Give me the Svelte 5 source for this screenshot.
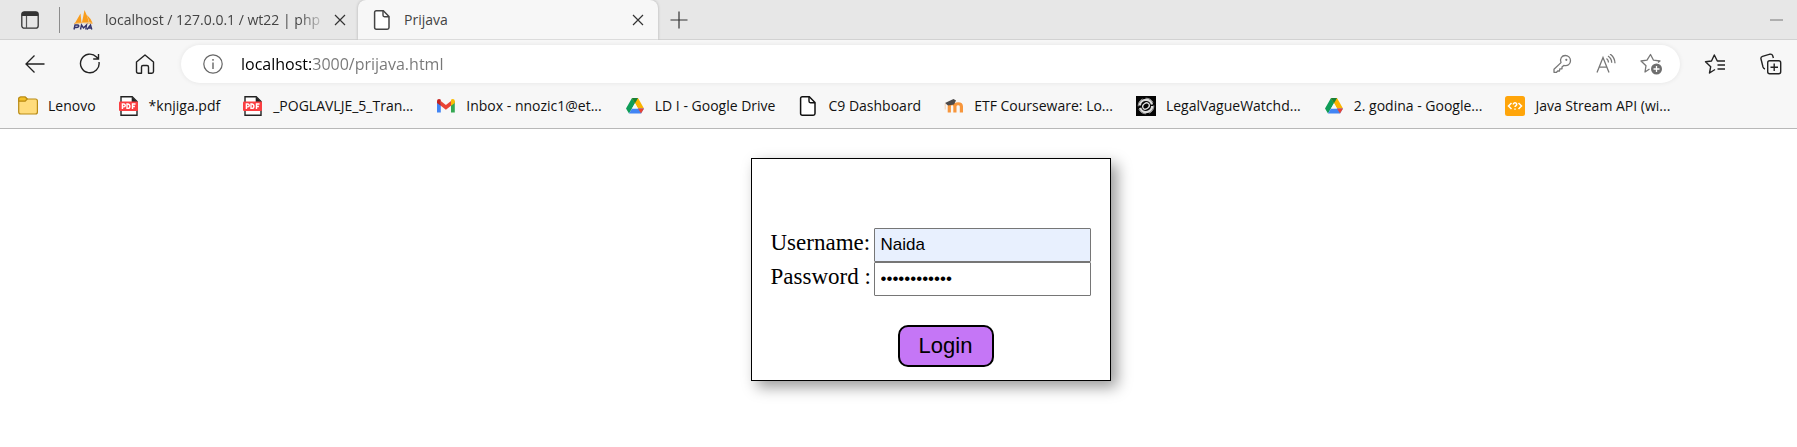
<script>
  const bookmarks = [
    { icon: 'folder', label: 'Lenovo' },
    { icon: 'pdf', label: '*knjiga.pdf' },
    { icon: 'pdf', label: '_POGLAVLJE_5_Tran...' },
    { icon: 'gmail', label: 'Inbox - nnozic1@et...' },
    { icon: 'drive', label: 'LD I - Google Drive' },
    { icon: 'page', label: 'C9 Dashboard' },
    { icon: 'moodle', label: 'ETF Courseware: Lo...' },
    { icon: 'swirl', label: 'LegalVagueWatchd...' },
    { icon: 'drive', label: '2. godina - Google...' },
    { icon: 'code', label: 'Java Stream API (wi...' }
  ];
  let address = $state('localhost:3000/prijava.html');
  let username = $state('Naida');
  let password = $state('abcdefghijkl');
</script>

{#snippet close()}
  <svg width="12" height="12" viewBox="0 0 12 12"><path d="M1 1l10 10M11 1L1 11" fill="none" stroke="#333" stroke-width="1.2" /></svg>
{/snippet}

{#snippet icon(name)}
  <svg class="icon" viewBox="0 0 20 20" aria-hidden="true">
    {#if name === 'folder'}
      <path d="M.7 3.2Q.7 1 2.8 1h4.4l2 2h8.3q1.9 0 1.900 2v11q0 2-2 2H2.700q-2 0-2-2z" fill="#ffdc7c" stroke="#b98b14" stroke-width="1.2" />
      <path d="M.7 3.2Q.7 1 2.8 1h4.4l2 2-2 2.2H.7z" fill="#f3c028" stroke="#b98b14" stroke-width="1.2" />
    {:else if name === 'pdf'}
      <path d="M2 6V.8h11.2L18 5.6V19.2H2V14" fill="#fff" stroke="#222" stroke-width="1.4" />
      <path d="M12.700 1v5H18z" fill="#222" />
      <rect x="0" y="5.5" width="19" height="9.6" rx="1" fill="#fb3f42" />
      <g fill="none" stroke="#fff" stroke-width="1.4"><path d="M3.400 13V8h1.400a1.300 1.300 0 010 2.900H3.400M8 8v4.400h.8c2.800 0 2.800-4.400 0-4.400zM13.500 13V8h3M13.500 10.500h2.400" /></g>
    {:else if name === 'gmail'}
      <path d="M1 5v11.500h3.800V8z" fill="#4285f4" /><path d="M18.800 5v11.500H15V8z" fill="#34a853" />
      <path d="M4.800 5l5.100 3.900L15 5v4.800l-5.100 3.900-5.100-3.900z" fill="#ea4335" />
      <path d="M1 7V5.200c0-2.200 2.300-2.700 3.800-1.400v6z" fill="#c5221f" />
      <path d="M18.800 7V5.200c0-2.200-2.300-2.700-3.800-1.400v6z" fill="#fbbc04" />
    {:else if name === 'drive'}
      <path d="M7 2h6L10 7.200 4 17.600 1 12.400z" fill="#0f9d58" />
      <path d="M7 2h6l6 10.400h-6z" fill="#fbb300" />
      <path d="M7 12.400h12l-3 5.200H4z" fill="#4285f4" />
      <path d="M13 12.400h6l-3 5.200z" fill="#ea4335" /><path d="M7 2h6l-3 5.200z" fill="#188038" />
      <path d="M10 7.200l3 5.200H7z" fill="#f7f7f7" />
    {:else if name === 'page'}
      <path d="M4.300.8h7L17 6.500v11q0 1.700-1.700 1.700H4.300q-1.700 0-1.700-1.700v-15Q2.600.8 4.300.8z" fill="#fff" stroke="currentColor" stroke-width="1.5" />
      <path d="M11 .8v4.500q0 1.400 1.400 1.400H17" fill="none" stroke="currentColor" stroke-width="1.4" />
    {:else if name === 'moodle'}
      <path d="M5.300 16.500V10.500c0-3.700 5.600-3.700 5.600 0v6m0-6c0-3.700 6.500-3.700 6.500 0v6" fill="none" stroke="#f7963c" stroke-width="3.200" />
      <path d="M1 7l8.500-4L12 4.500 10 8.500 4 9.500z" fill="#4d4a4a" /><path d="M1.200 7.500v6" stroke="#f2c7a0" stroke-width=".8" />
    {:else if name === 'swirl'}
      <rect width="20" height="20" fill="#050505" />
      <g fill="none" stroke="#ddd"><circle cx="10" cy="10" r="6.200" stroke-width="2.300" stroke-dasharray="17 2.500" /><circle cx="10" cy="10" r="7.800" stroke-width=".7" stroke-dasharray="9 3" /><ellipse cx="10" cy="10" rx="3.500" ry="2.800" transform="rotate(-35 10 10)" stroke-width="1.300" /></g>
    {:else if name === 'code'}
      <rect width="20" height="20" rx="2.500" fill="#ffa50a" />
      <path d="M6.500 7L3.500 10l3 3M13.500 7l3 3-3 3M8.300 8.500c0-2.300 3.500-2.100 3.400 0 0 1.200-1.700 1-1.700 2.600M10 12.400v1.300" fill="none" stroke="#fff" stroke-width="1.500" />
    {:else if name === 'pma'}
      <path d="M2 13L7.500 3.500 8.500 13zM9 12.500L11.500 0q3 6 4.500 12.500zM14 5q3.500 3 5.500 8l-3-.5z" fill="#f89c1c" />
      <path d="M1 13.500q9-1.800 18.500 0" fill="none" stroke="#f5b55c" />
      <path d="M1 19.500l1-4.500h2.500q2 .3 1 1.800-.7.900-3.500.7M7.500 19.500l1-4.500 2 3 3-3-.7 4.500M14 19.500l3.500-4.500 1.300 4.500M15.500 18h3" fill="none" stroke="#34336b" stroke-width="1.400" />
    {/if}
  </svg>
{/snippet}

<div class="browser">
  <div class="strip">
    <button class="plain side" aria-label="Tab actions">
      <svg width="18" height="18" viewBox="0 0 18 18"><rect x=".8" y=".8" width="16.400" height="16.400" rx="2.500" fill="none" stroke="#333" stroke-width="1.300" /><path d="M.8 5V3Q.8.8 3 .8h12q2.200 0 2.200 2.200v2z" fill="#333" /><path d="M5.500 5v12" stroke="#555" stroke-width="1.200" /></svg>
    </button>
    <div class="tab first">
      <button class="plain name">{@render icon('pma')}<span class="title fade">localhost / 127.0.0.1 / wt22 | php</span></button>
      <button class="plain" aria-label="Close tab">{@render close()}</button>
    </div>
    <div class="tab active">
      <button class="plain name">{@render icon('page')}<span class="title">Prijava</span></button>
      <button class="plain" aria-label="Close tab">{@render close()}</button>
    </div>
    <button class="plain new" aria-label="New tab">
      <svg width="18" height="18" viewBox="0 0 18 18"><path d="M9 .5v17M.5 9h17" stroke="#333" stroke-width="1.200" /></svg>
    </button>
    <button class="plain min" aria-label="Minimize">
      <svg width="13" height="2"><path d="M0 1h13" stroke="#777" /></svg>
    </button>
  </div>

  <div class="toolbar">
    <button class="plain" aria-label="Back"><svg width="20" height="20" viewBox="0 0 20 20"><path d="M19.500 10H1M9.500 1.500L1 10l8.500 8.500" fill="none" stroke="#222" stroke-width="1.300" /></svg></button>
    <button class="plain" aria-label="Refresh"><svg width="22" height="22" viewBox="0 0 22 22"><path d="M20 9a9.300 9.300 0 11-2.500-5L19 5.500M19.500 1v5h-5.300" fill="none" stroke="#222" stroke-width="1.400" /></svg></button>
    <button class="plain" aria-label="Home"><svg width="20" height="20" viewBox="0 0 20 20"><path d="M1.500 8L10 1l8.500 7v9.500q0 1.700-1.700 1.700h-3.300V13q0-1.500-1.500-1.500H8q-1.500 0-1.500 1.500v6.200H3.200q-1.700 0-1.700-1.700z" fill="none" stroke="#222" stroke-width="1.400" stroke-linejoin="round" /></svg></button>
    <div class="address">
      <svg width="20" height="20" viewBox="0 0 20 20"><circle cx="10" cy="10" r="9.200" fill="none" stroke="#666" stroke-width="1.200" /><path d="M10 8.500V15M10 5v1.800" stroke="#666" stroke-width="1.400" /></svg>
      <input type="text" aria-label="Address" bind:value={address} />
      <button class="plain" aria-label="Passwords"><svg width="20" height="20" viewBox="0 0 20 20"><path d="M2 18.300v-3l7-6.700C7.500 4.500 10 1.500 13.200 1.500c3 0 5.300 2.200 5.300 5.200 0 3.400-3 5.800-6.700 4.700L10 13v1.800H7.800L7.500 17H5.700l-1.200 1.300z" fill="none" stroke="#777" stroke-width="1.300" stroke-linejoin="round" /><circle cx="14.300" cy="5.800" r="1.100" fill="#777" /></svg></button>
      <button class="plain" aria-label="Read aloud"><svg width="20" height="20" viewBox="0 0 20 20"><path d="M1 18.500L7 3.500l6 15M3.200 13.200h7.600M10.500 4.500q2 1.500 2 4M12 2q3.700 2.400 3.700 6.700M14 0q4.800 3.300 5 9.200" fill="none" stroke="#777" stroke-width="1.300" /></svg></button>
      <button class="plain" aria-label="Add to favorites"><svg width="23" height="22" viewBox="0 0 23 22"><path d="M9.500 16L5 19l1-6.300L1 8l6-.8L10.500 1.500l3 5.700 6.500.8-2 1.500" fill="none" stroke="#777" stroke-width="1.300" stroke-linejoin="round" /><circle cx="16.500" cy="16" r="5.500" fill="#6e6e6e" /><path d="M16.500 13v6M13.500 16h6" stroke="#fff" stroke-width="1.300" /></svg></button>
    </div>
    <button class="plain fav" aria-label="Favorites"><svg width="22" height="20" viewBox="0 0 22 20"><path d="M11 15.500L5.500 19l1.200-6.300L1.500 7.800l6-.8L10.300 1l3 6H21M13.500 11H21M13.500 15H21" fill="none" stroke="#222" stroke-width="1.400" stroke-linejoin="round" /></svg></button>
    <button class="plain" aria-label="Collections"><svg width="22" height="22" viewBox="0 0 22 22"><g fill="none" stroke="#222" stroke-width="1.400"><rect x="7.700" y="7.700" width="13" height="13" rx="2" /><path d="M5 16q-1.500-.4-2-2L1 6Q.5 4 2.500 3.300L10 1.200q2-.4 2.700 1.500l.7 2.300M14.200 10.500v7.500M10.500 14.200H18" /></g></svg></button>
  </div>

  <nav class="bookmarks" aria-label="Favorites bar">
    {#each bookmarks as b}
      <a href="#bookmark">{@render icon(b.icon)}<span>{b.label}</span></a>
    {/each}
  </nav>
</div>

<main>
  <form onsubmit={(e) => e.preventDefault()}>
    <div class="row">
      <label for="username">Username:</label>
      <input class="filled" id="username" type="text" bind:value={username} />
    </div>
    <div class="row">
      <label for="password">Password :</label>
      <input id="password" type="password" bind:value={password} />
    </div>
    <button class="login">Login</button>
  </form>
</main>

<style>
  :global(body) { margin: 0; background: #fff; }
  * { box-sizing: border-box; }
  svg { display: block; flex: none; }
  .browser { font-family: "Open Sans", "Noto Sans", sans-serif; font-size: 14px; background: #f7f7f7; border-bottom: 1px solid #b8b8b8; }
  .plain { display: flex; align-items: center; padding: 0; border: 0; background: none; font: inherit; color: inherit; }
  .icon { width: 20px; height: 20px; }

  .strip { display: flex; align-items: center; height: 40px; padding: 0 14px 0 21px; background: #e7e7e7; border-bottom: 1px solid #d2d2d2; }
  .side { height: 26px; padding-right: 20px; border-right: 1px solid #8c8c8c; }
  .tab { display: flex; align-items: center; height: 40px; width: 300px; padding: 0 14px; color: #444; }
  .tab.first { width: 298px; padding: 0 12px 0 13px; }
  .name { flex: 1; min-width: 0; gap: 12px; text-align: left; }
  .title { flex: 1; white-space: nowrap; }
  .fade { mask-image: linear-gradient(to right, #000 194px, transparent 222px); }
  .first .name { margin-right: 8px; }
  .active { position: relative; background: #f7f7f7; border-radius: 8px 8px 0 0; box-shadow: 0 0 3px rgba(0, 0, 0, 0.25); clip-path: inset(0 -6px 0 -6px); }
  .active .name { gap: 12px; }
  .new { margin-left: 12px; }
  .min { margin-left: auto; }

  .toolbar { display: flex; align-items: center; height: 48px; padding: 0 15px 0 25px; gap: 34px; }
  .address { flex: 1; display: flex; align-items: center; gap: 24px; height: 38px; margin-left: -8px; padding: 0 17px 0 22px; background: #fff; border-radius: 19px; box-shadow: 0 0 5px rgba(0, 0, 0, 0.08); }
  .address input { flex: 1; min-width: 0; margin-left: -6px; padding: 0; border: 0; outline: 0; font: 16px "Open Sans", "Noto Sans", sans-serif; color: transparent; background: linear-gradient(to right, #000 71px, #777 71px); background-clip: text; }
  .fav { margin-left: -10px; }

  .bookmarks { display: flex; align-items: center; height: 40px; padding: 0 18px 5px; gap: 23px; }
  .bookmarks a { display: flex; align-items: center; gap: 10px; color: #111; text-decoration: none; white-space: nowrap; }

  main { display: flex; justify-content: center; padding: 29px 0 48px 64px; }
  form { display: flex; flex-direction: column; width: 360px; padding: 69px 19px 13px; border: 1px solid #000; box-shadow: 6px 6px 14px rgba(0, 0, 0, 0.4); }
  .row { display: flex; align-items: baseline; }
  .row label { width: 103px; font: 23px "Liberation Serif", "Times New Roman", serif; }
  .row input { flex: 1; min-width: 0; height: 34px; padding: 0 6px; border: 1px solid #767676; border-radius: 1px; font: 17px "Liberation Sans", Arial, sans-serif; color: #000; background: #fff; }
  .row input.filled { background: #e8f0fe; }
  .login { align-self: center; width: 96px; height: 42px; margin: 29px 0 0 30px; padding: 0; border: 2px solid #000; border-radius: 10px; background: #c576f6; color: #000; font: 22px "Liberation Sans", Arial, sans-serif; }
</style>
